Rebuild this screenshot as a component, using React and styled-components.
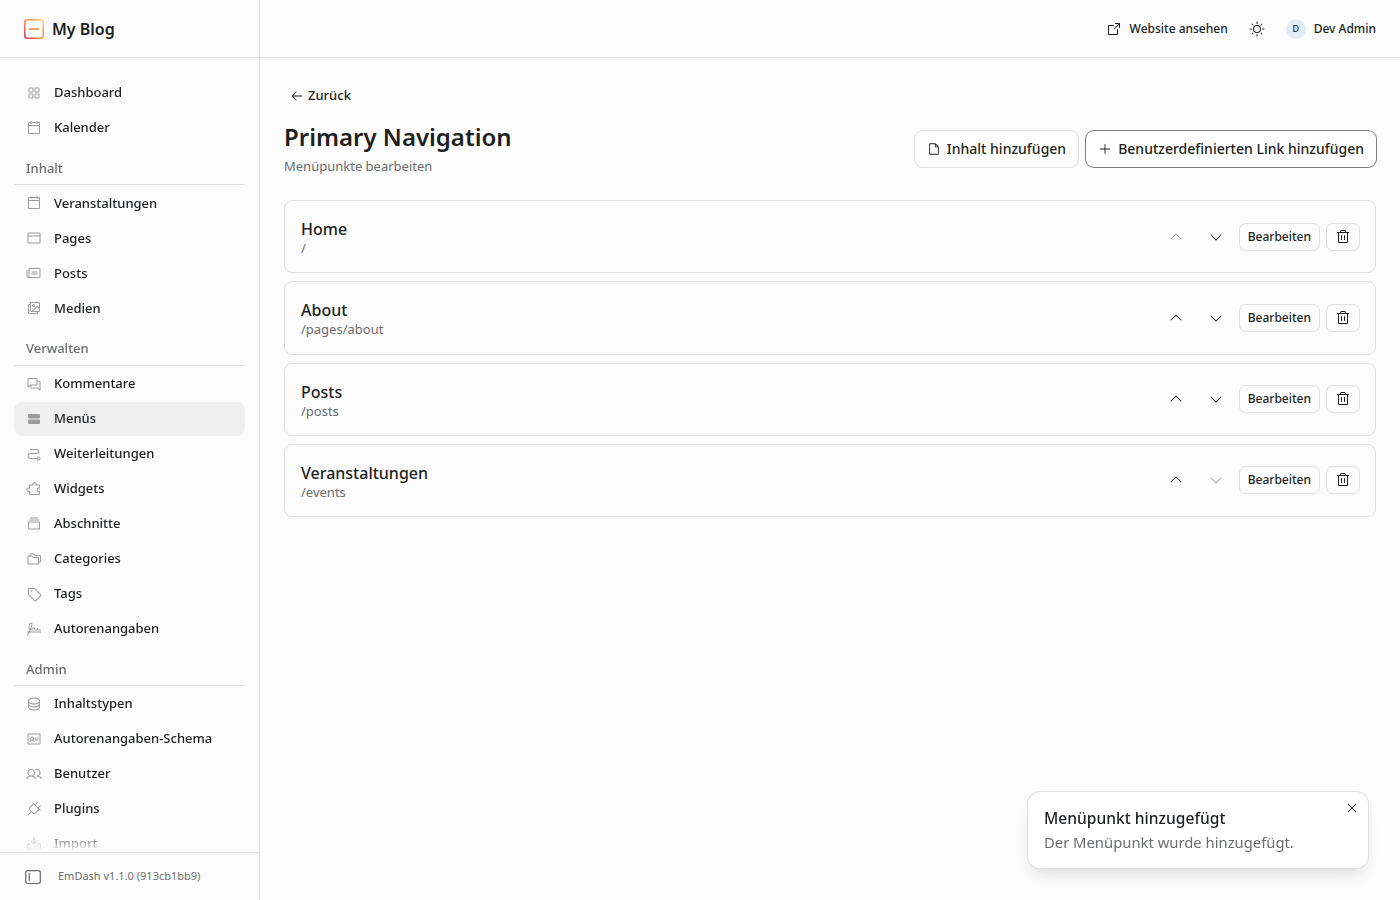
import styled, { createGlobalStyle, css } from "styled-components";
import {
  PiArrowLeft,
  PiArrowSquareOut,
  PiBrowser,
  PiCalendarBlank,
  PiCardsThree,
  PiCaretDown,
  PiCaretUp,
  PiChats,
  PiDatabase,
  PiDownload,
  PiFile,
  PiFolders,
  PiIdentificationCard,
  PiImagesSquare,
  PiNewspaper,
  PiPath,
  PiPlug,
  PiPlus,
  PiPuzzlePiece,
  PiRowsFill,
  PiSignature,
  PiSquaresFour,
  PiSun,
  PiTag,
  PiTrash,
  PiUsers,
  PiX,
} from "react-icons/pi";

const GlobalStyle = createGlobalStyle`
  * {
    box-sizing: border-box;
  }
  body {
    margin: 0;
    background: #fcfcfc;
    color: #1d1f21;
    font-family: "Noto Sans", sans-serif;
    overflow: hidden;
  }
  button {
    font-family: inherit;
    color: inherit;
    margin: 0;
    padding: 0;
    border: 0;
    background: transparent;
  }
`;

const Layout = styled.div`
  display: flex;
  height: 100vh;
`;

/* Sidebar */

const Sidebar = styled.aside`
  display: flex;
  flex-direction: column;
  flex: 0 0 260px;
  border-right: 1px solid #dfdfdf;
`;

const Brand = styled.div`
  display: flex;
  align-items: center;
  gap: 8px;
  flex: 0 0 58px;
  padding: 0 24px;
  border-bottom: 1px solid #dfdfdf;
  font-size: 16px;
  font-weight: 600;
`;

const Nav = styled.nav`
  flex: 1;
  min-height: 0;
  overflow: hidden;
  padding: 17.65px 14px 0;
  mask-image: linear-gradient(to bottom, #000 calc(100% - 24px), transparent);
`;

const NavLabel = styled.div`
  height: 34.45px;
  margin: 6px 0 1px;
  padding: 0 12px;
  border-bottom: 1px solid #dfdfdf;
  color: #6b6d6f;
  font-size: 13px;
  font-weight: 500;
  line-height: 34.8px;
`;

const NavItem = styled.a`
  display: flex;
  align-items: center;
  gap: 12px;
  height: 34px;
  margin-bottom: 1px;
  padding: 0 12px;
  border-radius: 8px;
  font-size: 13px;
  font-weight: 500;
  line-height: 20px;
  ${(props) => props.$active && css`background: #efefef;`}

  svg {
    flex: none;
    color: #9b9c9d;
  }
  span {
    padding-bottom: 0.96px;
  }
`;

const SidebarFooter = styled.div`
  display: flex;
  align-items: center;
  gap: 17px;
  flex: 0 0 48px;
  padding: 0 25px;
  border-top: 1px solid #dfdfdf;
  color: #6b6d6f;
  font-size: 11px;
  line-height: 16px;

  span {
    padding-bottom: 2px;
  }
`;

/* Main column */

const Main = styled.div`
  display: flex;
  flex-direction: column;
  flex: 1;
  min-width: 0;
`;

const Topbar = styled.header`
  display: flex;
  align-items: center;
  justify-content: flex-end;
  flex: 0 0 58px;
  padding: 0 24px;
  border-bottom: 1px solid #dfdfdf;
  font-size: 12px;
  font-weight: 500;
`;

const SiteLink = styled.a`
  display: flex;
  align-items: center;
  gap: 8px;
`;

const ThemeButton = styled.button`
  display: flex;
  margin: 0 21px;
`;

const User = styled.div`
  display: flex;
  align-items: center;
  gap: 8px;
`;

const Avatar = styled.span`
  display: grid;
  place-items: center;
  width: 20px;
  height: 20px;
  border-radius: 50%;
  background: #dfebf7;
  font-size: 9px;
`;

const Content = styled.main`
  padding: 24px;
`;

const BackButton = styled.button`
  display: flex;
  align-items: center;
  gap: 4px;
  height: 26px;
  padding: 0 6px;
  font-size: 13px;
  font-weight: 500;

  svg {
    margin-top: 1px;
  }
`;

const PageHead = styled.div`
  display: flex;
  align-items: center;
  justify-content: space-between;
  height: 68px;
  margin: 7px 0 17px;
`;

const Title = styled.h1`
  margin: 0;
  font-size: 24px;
  font-weight: 600;
  line-height: 31px;
`;

const Subtitle = styled.p`
  margin: 3.5px 0 1.5px;
  color: #6b6d6f;
  font-size: 13px;
  line-height: 20px;
`;

const Actions = styled.div`
  display: flex;
  gap: 8px;
`;

const RowActions = styled(Actions)`
  margin-bottom: 0.3px;
`;

const Button = styled.button`
  display: flex;
  align-items: center;
  gap: 6px;
  height: 36px;
  padding: 0 12px;
  border-radius: 8px;
  background: #fff;
  box-shadow: 0 0 0 1px ${(props) => (props.$strong ? "#7d7e80" : "#e0e0e0")};
  font-size: 14px;
  font-weight: 500;
  line-height: 20px;
`;

const MenuList = styled.div`
  display: flex;
  flex-direction: column;
  gap: 8px;
`;

const MenuCard = styled.div`
  display: flex;
  align-items: center;
  justify-content: space-between;
  height: 73.3px;
  padding: 0 16px;
  border: 1px solid #e0e0e0;
  border-radius: 8px;
`;

const MenuName = styled.div`
  font-size: 16px;
  font-weight: 500;
  line-height: 24px;
`;

const MenuPath = styled.div`
  color: #6b6d6f;
  font-size: 13px;
  line-height: 15.3px;
`;

const MoveButton = styled.button`
  display: grid;
  place-items: center;
  width: 32px;
  height: 26px;
  opacity: ${(props) => (props.disabled ? 0.4 : 1)};
`;

const SmallButton = styled.button`
  display: grid;
  place-items: center;
  height: 26px;
  padding: 0 8px;
  border-radius: 6px;
  background: #fdfdfd;
  box-shadow: 0 0 0 1px #e0e0e0;
  font-size: 12px;
  font-weight: 500;
  line-height: 16px;
`;

/* Toast */

const Toast = styled.div`
  position: fixed;
  right: 32px;
  bottom: 32px;
  width: 340px;
  height: 76px;
  padding: 14px 16px;
  border-radius: 12px;
  background: #fff;
  box-shadow: 0 0 0 1px #e0e0e0, 0 10px 15px -3px rgba(0, 0, 0, 0.1),
    0 4px 6px -4px rgba(0, 0, 0, 0.1);
`;

const ToastTitle = styled.div`
  font-size: 15.6px;
  font-weight: 500;
  line-height: 24px;
`;

const ToastText = styled.div`
  color: #6b6d6f;
  font-size: 14.8px;
  line-height: 25px;
`;

const ToastClose = styled.button`
  position: absolute;
  top: 9px;
  right: 9px;
  display: flex;
`;

function Logo() {
  return (
    <svg width="20" height="20" viewBox="0 0 20 20" fill="none">
      <defs>
        <linearGradient id="logo" x1="0" y1="20" x2="20" y2="0" gradientUnits="userSpaceOnUse">
          <stop offset="0" stopColor="#b2277c" />
          <stop offset="0.2" stopColor="#f0524a" />
          <stop offset="0.45" stopColor="#f98a3a" />
          <stop offset="0.75" stopColor="#fbb050" />
          <stop offset="1" stopColor="#fdd590" />
        </linearGradient>
      </defs>
      <rect x="0.75" y="0.75" width="18.5" height="18.5" rx="3" fill="#fff" stroke="url(#logo)" strokeWidth="1.5" />
      <rect x="5" y="9.2" width="10" height="1.6" fill="#f5803c" />
    </svg>
  );
}

function SidebarIcon() {
  return (
    <svg width="16" height="16" viewBox="0 0 16 16" fill="none" stroke="#66686a" strokeWidth="1.2">
      <rect x="0.7" y="1.7" width="14.6" height="12.8" rx="2" />
      <path d="M4.2 4.5v7" strokeLinecap="round" />
    </svg>
  );
}

const sections = [
  {
    items: [
      { name: "Dashboard", icon: PiSquaresFour },
      { name: "Kalender", icon: PiCalendarBlank },
    ],
  },
  {
    label: "Inhalt",
    items: [
      { name: "Veranstaltungen", icon: PiCalendarBlank },
      { name: "Pages", icon: PiBrowser },
      { name: "Posts", icon: PiNewspaper },
      { name: "Medien", icon: PiImagesSquare },
    ],
  },
  {
    label: "Verwalten",
    items: [
      { name: "Kommentare", icon: PiChats },
      { name: "Menüs", icon: PiRowsFill, active: true },
      { name: "Weiterleitungen", icon: PiPath },
      { name: "Widgets", icon: PiPuzzlePiece },
      { name: "Abschnitte", icon: PiCardsThree },
      { name: "Categories", icon: PiFolders },
      { name: "Tags", icon: PiTag },
      { name: "Autorenangaben", icon: PiSignature },
    ],
  },
  {
    label: "Admin",
    items: [
      { name: "Inhaltstypen", icon: PiDatabase },
      { name: "Autorenangaben-Schema", icon: PiIdentificationCard },
      { name: "Benutzer", icon: PiUsers },
      { name: "Plugins", icon: PiPlug },
      { name: "Import", icon: PiDownload },
    ],
  },
];

const menuItems = [
  { name: "Home", path: "/" },
  { name: "About", path: "/pages/about" },
  { name: "Posts", path: "/posts" },
  { name: "Veranstaltungen", path: "/events" },
];

function App() {
  return (
    <>
      <GlobalStyle />
      <Layout>
        <Sidebar>
          <Brand>
            <Logo />
            My Blog
          </Brand>
          <Nav>
            {sections.map((section, i) => (
              <div key={i}>
                {section.label && <NavLabel>{section.label}</NavLabel>}
                {section.items.map(({ name, icon: Icon, active }) => (
                  <NavItem key={name} $active={active}>
                    <Icon size={16} />
                    <span>{name}</span>
                  </NavItem>
                ))}
              </div>
            ))}
          </Nav>
          <SidebarFooter>
            <SidebarIcon />
            <span>EmDash v1.1.0 (913cb1bb9)</span>
          </SidebarFooter>
        </Sidebar>
        <Main>
          <Topbar>
            <SiteLink>
              <PiArrowSquareOut size={16} />
              Website ansehen
            </SiteLink>
            <ThemeButton>
              <PiSun size={16} />
            </ThemeButton>
            <User>
              <Avatar>D</Avatar>
              Dev Admin
            </User>
          </Topbar>
          <Content>
            <BackButton>
              <PiArrowLeft size={14} />
              Zurück
            </BackButton>
            <PageHead>
              <div>
                <Title>Primary Navigation</Title>
                <Subtitle>Menüpunkte bearbeiten</Subtitle>
              </div>
              <Actions>
                <Button>
                  <PiFile size={14} />
                  Inhalt hinzufügen
                </Button>
                <Button $strong>
                  <PiPlus size={14} />
                  Benutzerdefinierten Link hinzufügen
                </Button>
              </Actions>
            </PageHead>
            <MenuList>
              {menuItems.map((item, i) => (
                <MenuCard key={item.path}>
                  <div>
                    <MenuName>{item.name}</MenuName>
                    <MenuPath>{item.path}</MenuPath>
                  </div>
                  <RowActions>
                    <MoveButton disabled={i === 0}>
                      <PiCaretUp size={16} />
                    </MoveButton>
                    <MoveButton disabled={i === menuItems.length - 1}>
                      <PiCaretDown size={16} />
                    </MoveButton>
                    <SmallButton>Bearbeiten</SmallButton>
                    <SmallButton>
                      <PiTrash size={16} />
                    </SmallButton>
                  </RowActions>
                </MenuCard>
              ))}
            </MenuList>
          </Content>
        </Main>
      </Layout>
      <Toast>
        <ToastTitle>Menüpunkt hinzugefügt</ToastTitle>
        <ToastText>Der Menüpunkt wurde hinzugefügt.</ToastText>
        <ToastClose>
          <PiX size={14} />
        </ToastClose>
      </Toast>
    </>
  );
}

export default App;
